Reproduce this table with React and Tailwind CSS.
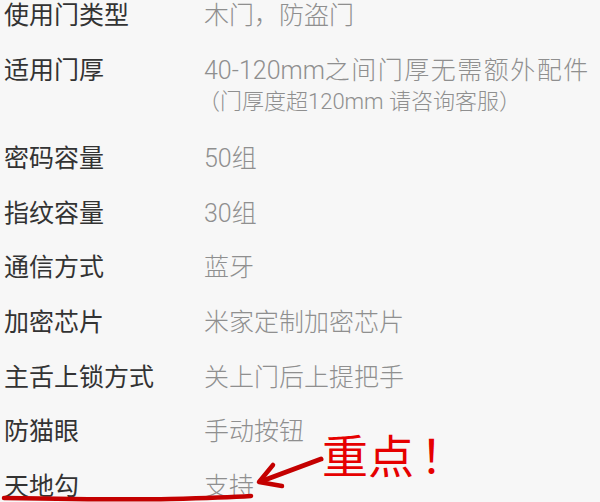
import React from 'react';

const specs = [
    { label: '使用门类型', value: '木门，防盗门' },
    {
        label: '适用门厚',
        value: (
            <>
                40-120mm<span className="tracking-[1.5px]">之间门厚无需额外配件</span>
            </>
        ),
        note: '（门厚度超120mm 请咨询客服）',
    },
    { label: '密码容量', value: '50组' },
    { label: '指纹容量', value: '30组' },
    { label: '通信方式', value: '蓝牙' },
    { label: '加密芯片', value: '米家定制加密芯片' },
    { label: '主舌上锁方式', value: '关上门后上提把手' },
    { label: '防猫眼', value: '手动按钮' },
    { label: '天地勾', value: '支持' },
];

function App() {
    return (
        <div
            className="relative w-[600px] h-[502px] overflow-hidden bg-[#f7f7f7]"
            style={{ fontFamily: 'Roboto, "Noto Sans CJK SC", sans-serif' }}
        >
            <div className="flex flex-col gap-[26.6px] pl-[4px] pt-[2px]">
                {specs.map(item => (
                    <div key={item.label} className="flex">
                        <div className="w-[200px] shrink-0 text-[25px] leading-[28px] text-[#333333]">
                            {item.label}
                        </div>
                        <div className="text-[#8f8f8f]">
                            <div className="text-[25px] leading-[28px] whitespace-nowrap font-light">{item.value}</div>
                            {item.note && (
                                <div className="text-[22px] leading-[34px] whitespace-nowrap -ml-[6px] font-light">{item.note}</div>
                            )}
                        </div>
                    </div>
                ))}
            </div>

            {/* annotation */}
            <div className="absolute left-[322px] top-[429px] text-[46px] leading-[56px] text-[#e60000] whitespace-nowrap">
                重点<span className="ml-[6px]">！</span>
            </div>
            <svg className="absolute inset-0 pointer-events-none" width="600" height="502" viewBox="0 0 600 502">
                <g stroke="#c40000" strokeLinecap="round" strokeLinejoin="round" fill="none">
                    <path d="M321 459 L262 481" strokeWidth="5" />
                    <path d="M273 465 L259 482 L282 486" strokeWidth="4.5" />
                    <path d="M4 498 C60 499 120 500 170 499 C210 498 235 497 251 496" strokeWidth="4.5" />
                </g>
            </svg>
        </div>
    );
}

export default App;
